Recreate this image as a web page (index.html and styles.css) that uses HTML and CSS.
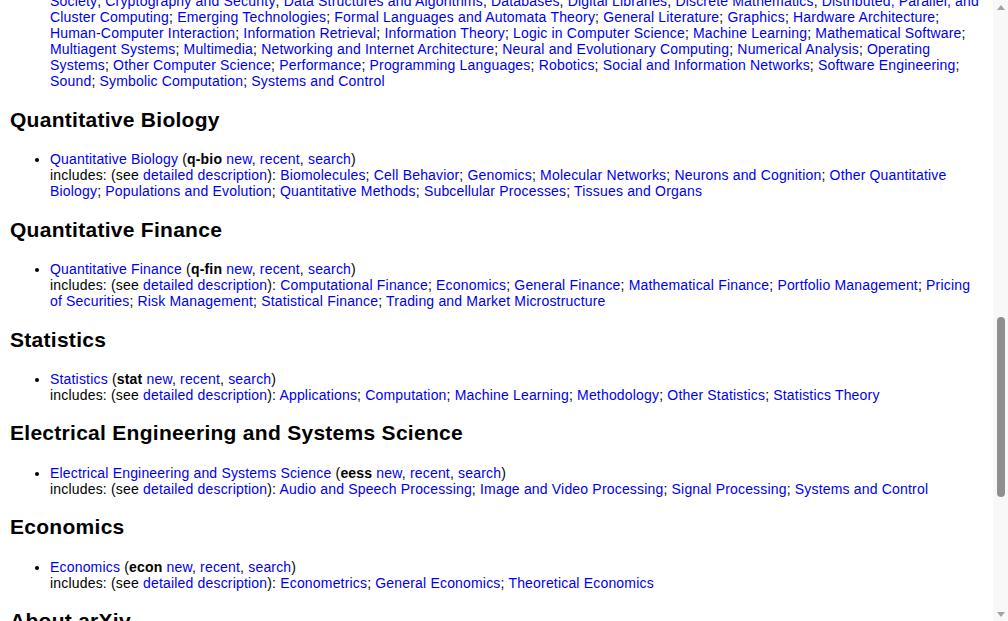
FILE: index.html
```html
<!DOCTYPE html>
<html lang="en">
<head>
<meta charset="utf-8">
<title>arXiv.org e-Print archive</title>
<link rel="stylesheet" href="styles.css">
</head>
<body>
<div class="window">
  <div class="viewport">
    <div class="scrolled">
      <h2>Computer Science</h2>
      <ul>
        <li><a href="#">Computer Science</a> (<b>cs</b> <a href="#">new</a>, <a href="#">recent</a>, <a href="#">search</a>)<br>
        includes: (see <a href="#">detailed description</a>): <a href="#">Artificial Intelligence</a>; <a href="#">Computation and Language</a>; <a href="#">Computational Complexity</a>; <a href="#">Computational Engineering, Finance, and Science</a>; <a href="#">Computational Geometry</a>; <a href="#">Computer Science and Game Theory</a>; <a href="#">Computer Vision and Pattern Recognition</a>; <a href="#">Computers and Society</a>; <a href="#">Cryptography and Security</a>; <a href="#">Data Structures and Algorithms</a>; <a href="#">Databases</a>; <a href="#">Digital Libraries</a>; <a href="#">Discrete Mathematics</a>; <a href="#">Distributed, Parallel, and Cluster Computing</a>; <a href="#">Emerging Technologies</a>; <a href="#">Formal Languages and Automata Theory</a>; <a href="#">General Literature</a>; <a href="#">Graphics</a>; <a href="#">Hardware Architecture</a>; <a href="#">Human-Computer Interaction</a>; <a href="#">Information Retrieval</a>; <a href="#">Information Theory</a>; <a href="#">Logic in Computer Science</a>; <a href="#">Machine Learning</a>; <a href="#">Mathematical Software</a>; <a href="#">Multiagent Systems</a>; <a href="#">Multimedia</a>; <a href="#">Networking and Internet Architecture</a>; <a href="#">Neural and Evolutionary Computing</a>; <a href="#">Numerical Analysis</a>; <a href="#">Operating Systems</a>; <a href="#">Other Computer Science</a>; <a href="#">Performance</a>; <a href="#">Programming Languages</a>; <a href="#">Robotics</a>; <a href="#">Social and Information Networks</a>; <a href="#">Software Engineering</a>; <a href="#">Sound</a>; <a href="#">Symbolic Computation</a>; <a href="#">Systems and Control</a></li>
      </ul>

      <h2>Quantitative Biology</h2>
      <ul>
        <li><a href="#">Quantitative Biology</a> (<b>q-bio</b> <a href="#">new</a>, <a href="#">recent</a>, <a href="#">search</a>)<br>
        includes: (see <a href="#">detailed description</a>): <a href="#">Biomolecules</a>; <a href="#">Cell Behavior</a>; <a href="#">Genomics</a>; <a href="#">Molecular Networks</a>; <a href="#">Neurons and Cognition</a>; <a href="#">Other Quantitative Biology</a>; <a href="#">Populations and Evolution</a>; <a href="#">Quantitative Methods</a>; <a href="#">Subcellular Processes</a>; <a href="#">Tissues and Organs</a></li>
      </ul>

      <h2>Quantitative Finance</h2>
      <ul>
        <li><a href="#">Quantitative Finance</a> (<b>q-fin</b> <a href="#">new</a>, <a href="#">recent</a>, <a href="#">search</a>)<br>
        includes: (see <a href="#">detailed description</a>): <a href="#">Computational Finance</a>; <a href="#">Economics</a>; <a href="#">General Finance</a>; <a href="#">Mathematical Finance</a>; <a href="#">Portfolio Management</a>; <a href="#">Pricing of Securities</a>; <a href="#">Risk Management</a>; <a href="#">Statistical Finance</a>; <a href="#">Trading and Market Microstructure</a></li>
      </ul>

      <h2>Statistics</h2>
      <ul>
        <li><a href="#">Statistics</a> (<b>stat</b> <a href="#">new</a>, <a href="#">recent</a>, <a href="#">search</a>)<br>
        includes: (see <a href="#">detailed description</a>): <a href="#">Applications</a>; <a href="#">Computation</a>; <a href="#">Machine Learning</a>; <a href="#">Methodology</a>; <a href="#">Other Statistics</a>; <a href="#">Statistics Theory</a></li>
      </ul>

      <h2>Electrical Engineering and Systems Science</h2>
      <ul>
        <li><a href="#">Electrical Engineering and Systems Science</a> (<b>eess</b> <a href="#">new</a>, <a href="#">recent</a>, <a href="#">search</a>)<br>
        includes: (see <a href="#">detailed description</a>): <a href="#">Audio and Speech Processing</a>; <a href="#">Image and Video Processing</a>; <a href="#">Signal Processing</a>; <a href="#">Systems and Control</a></li>
      </ul>

      <h2>Economics</h2>
      <ul>
        <li><a href="#">Economics</a> (<b>econ</b> <a href="#">new</a>, <a href="#">recent</a>, <a href="#">search</a>)<br>
        includes: (see <a href="#">detailed description</a>): <a href="#">Econometrics</a>; <a href="#">General Economics</a>; <a href="#">Theoretical Economics</a></li>
      </ul>

      <h2>About arXiv</h2>
      <ul>
        <li><a href="#">General information</a></li>
        <li><a href="#">How to Submit to arXiv</a></li>
      </ul>
    </div>
  </div>
  <div class="scrollbar">
    <div class="arrow arrow-up"></div>
    <div class="track">
      <div class="thumb"></div>
    </div>
    <div class="arrow arrow-down"></div>
  </div>
</div>
</body>
</html>
```

FILE: styles.css
```css
html, body {
  margin: 0;
  padding: 0;
  height: 100%;
  overflow: hidden;
  background: #ffffff;
}

body {
  font-family: "Liberation Sans", Arial, Helvetica, sans-serif;
  font-size: 14px;
  line-height: 16px;
  letter-spacing: 0.18px;
  color: #000000;
}

.window {
  display: flex;
  height: 100vh;
}

.viewport {
  flex: 1;
  min-width: 0;
  overflow: hidden;
  padding: 0 10px;
}

.scrolled {
  margin-top: -116.5px;
}

h2 {
  font-size: 21px;
  line-height: normal;
  letter-spacing: 0.28px;
  font-weight: bold;
  margin: 18.4px 0 19.5px;
}

ul {
  margin: 14px 0;
  padding-left: 40px;
}

a {
  color: #0000ee;
  text-decoration: none;
}

b {
  font-weight: bold;
}

.scrollbar {
  width: 15px;
  flex: 0 0 15px;
  background: #f8f8f8;
  display: flex;
  flex-direction: column;
  align-items: center;
}

.arrow {
  flex: 0 0 15px;
  width: 15px;
  display: flex;
  align-items: center;
  justify-content: center;
}

.arrow::before {
  content: "";
  width: 0;
  height: 0;
  border-left: 4px solid transparent;
  border-right: 4px solid transparent;
}

.arrow-up::before {
  border-bottom: 5px solid #a3a3a3;
  margin-top: -1px;
}

.arrow-down::before {
  border-top: 5px solid #a3a3a3;
  margin-top: 1px;
}

.track {
  flex: 1;
  width: 15px;
  display: flex;
  justify-content: center;
}

.thumb {
  width: 8px;
  height: 180px;
  margin-top: 302px;
  background: #8f8f8f;
  border-radius: 4px;
}
```
